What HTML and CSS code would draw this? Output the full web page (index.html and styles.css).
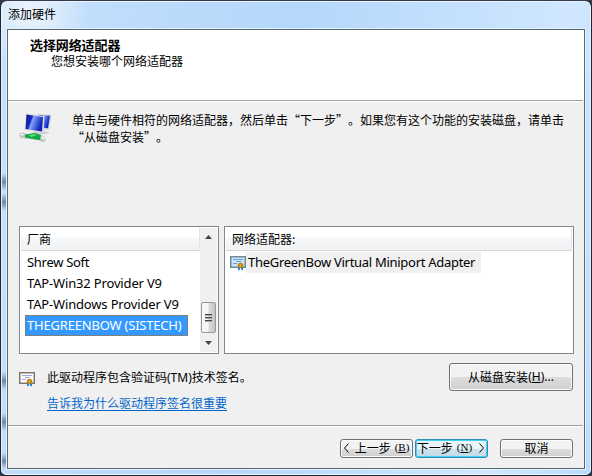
FILE: index.html
```
<!DOCTYPE html>
<html lang="zh-CN">
<head>
<meta charset="utf-8">
<title>添加硬件</title>
<link rel="stylesheet" href="styles.css">
</head>
<body>
<svg width="0" height="0" class="defs">
  <symbol id="cert" viewBox="0 0 16 15">
    <rect x=".75" y=".75" width="14.5" height="10.5" class="cert-paper" stroke-width="1.5"/>
    <path d="M3 3.500h10M6 5.500h5M3 7.500h4" class="cert-lines"/>
    <path d="M8 10v4.500l2-1V11zm5 0v4.500l-2-1V11z" fill="#2878e8"/>
    <circle cx="10.500" cy="9.500" r="2.800" fill="#b98718"/>
    <circle cx="10.500" cy="9.300" r="1.100" fill="#e4b43c"/>
  </symbol>
</svg>
<div class="window">
  <div class="titlebar"><span>添加硬件</span></div>
  <main class="client">
    <header class="heading">
      <h1>选择网络适配器</h1>
      <p>您想安装哪个网络适配器</p>
    </header>
    <section class="content">
      <div class="intro">
        <svg class="net" width="34" height="31" viewBox="0 0 34 31">
          <defs>
            <linearGradient id="scr" x1="0" y1="0" x2="1" y2=".35"><stop offset="0" stop-color="#0a1190"/><stop offset=".38" stop-color="#1a2cc4"/><stop offset=".46" stop-color="#8ba2f0"/><stop offset=".75" stop-color="#3f5cdc"/><stop offset="1" stop-color="#0f20b4"/></linearGradient>
          </defs>
          <path d="M17 1l15.500 .500-2 15-10 1z" fill="#d3d7e2"/>
          <path d="M18 2l13 .700-2 12.500-8-1z" fill="url(#scr)"/>
          <path d="M14 19l10-1 7 1.500-7 2-12-1z" fill="#c9cccf"/>
          <path d="M7 .5L25.500 3l-1 17L5.500 17z" fill="#dddfe3"/>
          <path d="M7.500 1.500L24 4l-1 14.500L6.500 16z" fill="url(#scr)"/>
          <path d="M0 20.500l4-1 3 1.500 14 1 5 2 1 4-4 1-5-2.500-12-1-5-1z" fill="#c0c6c4"/>
          <path d="M6 21.500l10-1.500 6 2-1 5-5-.500-10-2z" fill="#14a846"/>
          <path d="M9.500 22.500l6-1.500 2 1-5 2z" fill="#5de276"/>
          <path d="M1.500 21l3 1M22 24l4 2" stroke="#f6f8f8" stroke-width="1.500"/>
        </svg>
        <p>单击与硬件相符的网络适配器，然后单击<q>下一步</q>。如果您有这个功能的安装磁盘，请单击<br><q>从磁盘安装</q>。</p>
      </div>
      <div class="lists">
        <div class="box vendors">
          <div class="list">
            <div class="colhead">厂商</div>
            <ul>
              <li class="short">Shrew Soft</li>
              <li>TAP-Win32 Provider V9</li>
              <li>TAP-Windows Provider V9</li>
              <li class="selected">THEGREENBOW (SISTECH)</li>
            </ul>
          </div>
          <div class="scroll">
            <svg width="7" height="4" viewBox="0 0 7 4"><path d="M0 4L3.500 0 7 4z" fill="#444"/></svg>
            <div class="thumb"><i></i><i></i><i></i></div>
            <svg width="7" height="4" viewBox="0 0 7 4"><path d="M0 0l3.500 4L7 0z" fill="#444"/></svg>
          </div>
        </div>
        <div class="box adapters">
          <div class="colhead">网络适配器:</div>
          <div class="device"><svg class="cert blue" width="16" height="15"><use href="#cert"/></svg><span class="name">TheGreenBow Virtual Miniport Adapter</span></div>
        </div>
      </div>
      <div class="signing">
        <svg class="cert" width="16" height="15"><use href="#cert"/></svg>
        <div class="signtext">
          <p>此驱动程序包含验证码<span class="tm">(TM)</span>技术签名。</p>
          <a>告诉我为什么驱动程序签名很重要</a>
        </div>
        <div class="btn disk">从磁盘安装<span class="tm">(<u>H</u>)...</span></div>
      </div>
    </section>
    <footer>
      <div class="btn back"><svg width="5" height="10" viewBox="0 0 5 10"><path d="M4.500 .5L.5 5l4 4.500" class="chev"/></svg><span>上一步</span><span class="key">(<u>B</u>)</span></div>
      <div class="btn next"><span>下一步</span><span class="key">(<u>N</u>)</span><svg width="5" height="10" viewBox="0 0 5 10"><path d="M.5 .5l4 4.500-4 4.500" class="chev"/></svg></div>
      <div class="btn cancel">取消</div>
    </footer>
  </main>
</div>
</body>
</html>
```
FILE: styles.css
```
* { box-sizing: border-box; margin: 0; padding: 0; }
body {
  width: 592px; height: 476px; overflow: hidden;
  background: #343946;
  font: 12px/17px "Noto Sans CJK SC", sans-serif;
  color: #000;
}
.defs { display: block; height: 0; }
.window {
  width: 592px; height: 476px;
  border: 1px solid #1e2532; border-top-color: #353a4a;
  border-radius: 7px 7px 6px 6px;
  box-shadow: inset 0 0 0 1px #eaf5ff;
  padding: 0 6px 6px;
  background:
    radial-gradient(ellipse at 30px 12px, rgba(255,255,255,.7), transparent 60px) no-repeat,
    linear-gradient(transparent, #6f86a5, transparent) 1px 172px / 4px 18px no-repeat,
    linear-gradient(transparent, #6f86a5, transparent) 1px 192px / 4px 18px no-repeat,
    linear-gradient(transparent, #6f86a5, transparent) 1px 371px / 4px 18px no-repeat,
    linear-gradient(transparent, #6f86a5, transparent) 1px 412px / 4px 18px no-repeat,
    linear-gradient(transparent, #6f86a5, transparent) 1px 452px / 4px 16px no-repeat,
    linear-gradient(100deg, #c6e0fb 0, #b4d7fb 45%, #d0e7ff 85%, #bbdcff 100%);
}
.titlebar { height: 28px; padding: 4px 0 0 1px; }
.client {
  height: 440px; border: 1px solid #596775;
  background: linear-gradient(#fff 72px, #f0f0f0 72px);
  box-shadow: 0 0 0 1px #e3f2ff;
  display: flex; flex-direction: column;
}
.heading { height: 71px; margin-right: 1px; padding: 7px 0 0 22px; border-bottom: 1px solid #a0a0a0; }
h1 { font-size: 13px; letter-spacing: -.1px; line-height: 16px; font-weight: 700; white-space: nowrap; }
.heading p { padding-left: 21px; line-height: 15px; }
.content { flex: 1; padding: 10px 10px 0 11px; }
.intro { display: flex; height: 115px; }
.net { margin: 2px 0 0; flex: none; }
.intro p { margin-left: 19px; white-space: nowrap; }
q { quotes: none; }
q::before { content: "“"; display: inline-block; width: 12px; text-align: right; }
q::after { content: "”"; display: inline-block; width: 12px; }
.lists { display: flex; gap: 5px; height: 128px; }
.box { border: 1px solid #828790; background: #fff; padding: 1px; }
.vendors { width: 200px; display: flex; }
.list { flex: 1; }
.adapters { width: 350px; }
.colhead {
  height: 23px; padding: 2px 0 0 6px; line-height: 17px;
  border-bottom: 1px solid #d5d5d5; border-right: 1px solid #e1e3e6;
  background: linear-gradient(#fff 40%, #f7f8fa 41%, #f1f2f4);
}
ul { list-style: none; padding: 1px 0 0 4px; }
li { height: 21px; padding-left: 2px; font: 13px/20px "Noto Sans", sans-serif; letter-spacing: -.16px; white-space: nowrap; width: 163px; }
li.short { letter-spacing: -.3px; }
li.selected { background: #3399ff; color: #fff; letter-spacing: -.2px; outline: 1px dotted #cc6600; outline-offset: -1px; }
.scroll { width: 17px; background: #f0f0f0; display: flex; flex-direction: column; align-items: center; padding: 7px 0; }
.thumb {
  width: 15px; height: 31px; margin: auto 0 8px; border: 1px solid #979797; border-radius: 2px;
  background: linear-gradient(90deg, #f6f6f6 45%, #dadadc 55%, #c4c4c7);
  display: flex; flex-direction: column; align-items: center; justify-content: center; gap: 1px;
}
.thumb i { width: 7px; height: 2px; background: linear-gradient(#444 50%, #aaa 50%); }
.device { display: flex; padding: 1px 0 0 4px; }
.cert { --paper: #fff; --frame: #80786a; --lines: #9caad8; flex: none; display: block; }
.cert.blue { --paper: #c9e6fb; --frame: #708a9a; --lines: #6c9ce0; }
.cert-paper { fill: var(--paper); stroke: var(--frame); }
.cert-lines { fill: none; stroke: var(--lines); }
.device .cert { margin-top: 4px; }
.name { height: 21px; width: 235px; padding-left: 2px; background: #f0f0f0; font: 13px/20px "Noto Sans", sans-serif; letter-spacing: -.29px; white-space: nowrap; }
.signing { display: flex; padding-top: 9px; }
.signing .cert { margin-top: 9px; }
.signtext { margin: 5px 0 0 12px; flex: 1; }
a { display: block; margin-top: 8px; color: #0066cc; text-decoration: underline; text-underline-offset: 2px; }
.tm { font-family: "Noto Sans", sans-serif; }
.btn {
  border: 1px solid #707070; border-radius: 3px; box-shadow: inset 0 0 0 1px #fbfbfb;
  background: linear-gradient(#f2f2f2 50%, #dddddd 51%, #cfcfcf);
  display: flex; align-items: center; justify-content: center; white-space: nowrap;
}
.disk { width: 124px; height: 28px; margin-right: 1px; padding-bottom: 1px; }
footer { height: 43px; margin-right: 1px; border-top: 1px solid #a0a0a0; box-shadow: inset 0 1px #fff; display: flex; justify-content: flex-end; padding: 13px 10px 0 0; }
footer .btn { width: 73px; height: 19px; padding-bottom: 2px; line-height: 15px; }
footer .next { margin: 0 12px 0 2px; padding-right: 2px; border-color: #2f8fb0; box-shadow: inset 0 0 0 1px #3fd0f8; background: linear-gradient(#eaf5fa 50%, #cfe3ec 51%, #c3dae6); }
.chev { fill: none; stroke: #000; }
.back svg { margin-right: 6px; }
.next svg { margin-left: 7px; }
.key { font-family: "Liberation Serif", serif; font-size: 11px; margin-left: 4px; }
```
